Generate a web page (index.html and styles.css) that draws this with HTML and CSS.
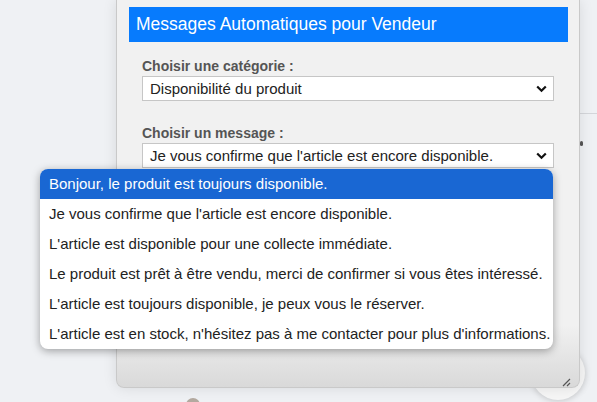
FILE: index.html
```html
<!DOCTYPE html>
<html lang="fr">
<head>
  <meta charset="UTF-8" />
  <meta name="viewport" content="width=device-width, initial-scale=1.0"/>
  <title>Messages Automatiques</title>
  <link rel="stylesheet" href="styles.css">
</head>
<body>
  <div class="chat-bubble"></div>
  <div class="avatar"></div>
  <div class="side-line"></div>
  <div class="side-dot"></div>

  <section class="panel">
    <h2 class="panel-title">Messages Automatiques pour Vendeur</h2>

    <div class="field">
      <label>Choisir une catégorie :</label>
      <div class="select">
        <span>Disponibilité du produit</span>
        <svg class="chevron" width="11" height="8" viewBox="0 0 11 8"><path d="M1.2 1.5 L5.5 5.8 L9.8 1.5" fill="none" stroke="#111" stroke-width="2.2"/></svg>
      </div>
    </div>

    <div class="field">
      <label>Choisir un message :</label>
      <div class="select">
        <span>Je vous confirme que l'article est encore disponible.</span>
        <svg class="chevron" width="11" height="8" viewBox="0 0 11 8"><path d="M1.2 1.5 L5.5 5.8 L9.8 1.5" fill="none" stroke="#111" stroke-width="2.2"/></svg>
      </div>
    </div>

    <svg class="resize" width="10" height="10" viewBox="0 0 10 10"><path d="M9 2 L2 9 M9 6 L6 9" stroke="#555" stroke-width="1.2"/></svg>
  </section>

  <ul class="dropdown">
    <li class="selected">Bonjour, le produit est toujours disponible.</li>
    <li>Je vous confirme que l'article est encore disponible.</li>
    <li>L'article est disponible pour une collecte immédiate.</li>
    <li>Le produit est prêt à être vendu, merci de confirmer si vous êtes intéressé.</li>
    <li>L'article est toujours disponible, je peux vous le réserver.</li>
    <li>L'article est en stock, n'hésitez pas à me contacter pour plus d'informations.</li>
  </ul>
</body>
</html>
```

FILE: styles.css
```css
* { margin: 0; padding: 0; box-sizing: border-box; }
body { font-family: 'Liberation Sans', Arial, sans-serif; background: #eff1f4; height: 402px; overflow: hidden; position: relative; }

/* page behind the popup */
.chat-bubble { position: absolute; left: 531px; top: 346px; width: 54px; height: 54px; border-radius: 50%; background: #f6f6f6; box-shadow: 0 1px 6px rgba(0,0,0,0.18); }
.avatar { position: absolute; left: 186px; top: 398px; width: 14px; height: 14px; border-radius: 50%; background: #b3a99f; }
.side-line { position: absolute; left: 580px; top: 113px; width: 17px; height: 1px; background: #d4d6da; }
.side-dot { position: absolute; left: 580px; top: 141px; width: 3px; height: 5px; border-radius: 2px; background: #555; }

/* popup */
.panel { position: relative; z-index: 1; margin-left: 116px; width: 464px; height: 388px; padding: 7px 11px 0 12px; background: linear-gradient(#f1f1f1 0, #f1f1f1 84%, #d9d9d9 100%); border: 1px solid #c9c9c9; border-top: none; border-radius: 0 0 8px 8px; box-shadow: 0 0 14px rgba(0,0,0,0.1); }
.panel-title { height: 35px; line-height: 35px; padding-left: 7px; background: #077bfd; color: #fff; font-size: 17.5px; font-weight: normal; }
.field { margin: 0 14px 0 13px; }
.field label { display: block; margin-top: 16px; margin-bottom: 2px; font-size: 14px; line-height: 16px; font-weight: bold; color: #555; }
.field + .field label { margin-top: 24px; }
.select { display: flex; align-items: center; justify-content: space-between; height: 25px; padding: 0 6px 0 7px; background: #fff; border: 1px solid #c6c6c6; font-size: 15px; color: #222; }
.chevron { flex: none; }
.resize { position: absolute; right: 8px; bottom: 0; }

/* open list of the message select */
.dropdown { position: absolute; z-index: 2; left: 40px; top: 169px; width: 513px; list-style: none; background: #fff; border-radius: 8px; overflow: hidden; box-shadow: 0 2px 8px rgba(0,0,0,0.35); }
.dropdown li { height: 30px; line-height: 30px; padding-left: 9px; font-size: 15px; color: #222; white-space: nowrap; }
.dropdown li.selected { background: #1967d3; color: #fff; }
```
